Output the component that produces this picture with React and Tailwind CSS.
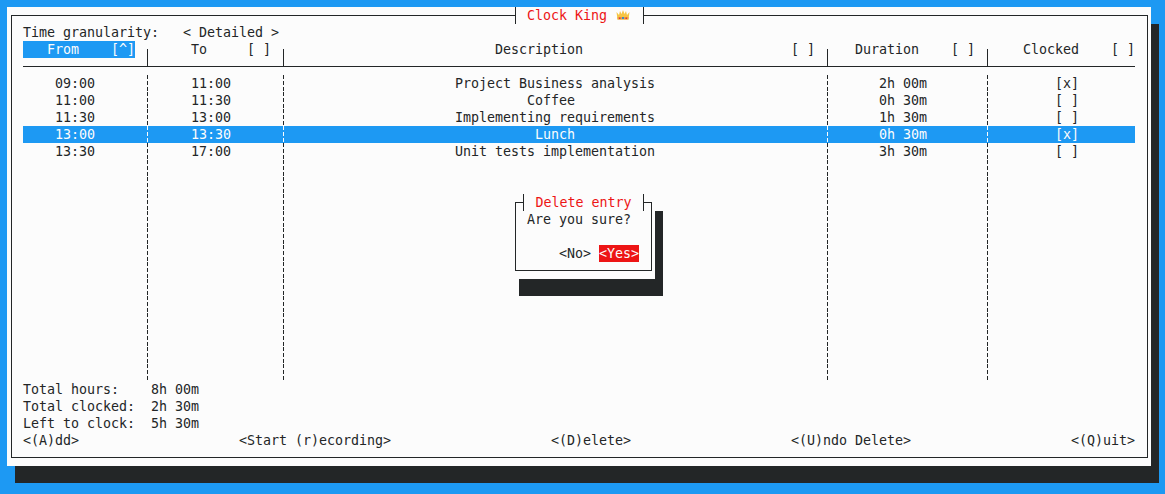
const rows = [
  { from: "09:00", to: "11:00", desc: "Project Business analysis", dur: "2h 00m", clocked: "[x]" },
  { from: "11:00", to: "11:30", desc: "Coffee", dur: "0h 30m", clocked: "[ ]" },
  { from: "11:30", to: "13:00", desc: "Implementing requirements", dur: "1h 30m", clocked: "[ ]" },
  { from: "13:00", to: "13:30", desc: "Lunch", dur: "0h 30m", clocked: "[x]", selected: true },
  { from: "13:30", to: "17:00", desc: "Unit tests implementation", dur: "3h 30m", clocked: "[ ]" },
];
const COLS = "grid grid-cols-[120px_8px_128px_8px_536px_8px_152px_8px_144px]";

function Dash() {
  return (
    <div className="h-[17px] w-2 pl-1">
      <div className="h-full w-px bg-[linear-gradient(currentColor_0,currentColor_4px,transparent_4px,transparent_6px,currentColor_6px,currentColor_10px,transparent_10px,transparent_12px,currentColor_12px,currentColor_16px,transparent_16px)]" />
    </div>
  );
}
function Head({ label, sort = "[ ]", className = "" }) {
  return (
    <div className={`flex whitespace-pre ${className}`}>
      <span className="flex-1 text-center">{label}</span>
      <span>{sort}</span>
    </div>
  );
}
function Tick() {
  return (
    <div className="h-[17px] w-2 pl-1 pt-2">
      <div className="h-full w-px bg-[#232627]" />
    </div>
  );
}
function Row({ r }) {
  return (
    <div className={`${COLS} h-[17px] text-center whitespace-pre ${r?.selected ? "bg-[#1d99f3] text-[#fcfcfc]" : ""}`}>
      <div className="pr-4">{r?.from}</div>
      <Dash />
      <div className="pr-2">{r?.to}</div>
      <Dash />
      <div className={r && r.desc.length % 2 === 0 ? "pr-2" : ""}>{r?.desc}</div>
      <Dash />
      <div className="pr-2">{r?.dur}</div>
      <Dash />
      <div className="pl-2">{r?.clocked}</div>
    </div>
  );
}
function Crown() {
  return (
    <svg width="14" height="10" viewBox="0 0 14 10" className="ml-[9px] mt-[3px] shrink-0">
      <path d="M0.5 2 L3 5 L4 1 L5.5 4 L7 0 L8.5 4 L10 1 L11 5 L13.5 2 L12.5 9.5 L1.5 9.5 Z" fill="#f6c544" />
      <rect x="1.5" y="7" width="11" height="2.5" fill="#eda53c" />
      <rect x="3" y="7.5" width="1.5" height="1.5" fill="#dd2e44" />
      <rect x="6" y="7" width="2" height="2" fill="#3b88c3" />
      <rect x="9.5" y="7.5" width="1.5" height="1.5" fill="#dd2e44" />
    </svg>
  );
}

export default function App() {
  return (
    <div className="h-[494px] w-full overflow-hidden bg-[#1d99f3] p-[7px] font-['DejaVu_Sans_Mono',monospace] text-[13.33px] leading-[17px] tracking-[-0.025px] text-[#232627]">
      <div className="relative h-[459px] w-[1144px] bg-[#fcfcfc] px-1 py-2 shadow-[8px_17px_0_#232627]">
        <div className="h-[443px] w-[1137px] border border-[#232627] pl-[11px] pr-3 pt-2">
          <div className="whitespace-pre">Time granularity:   {"<"} Detailed {">"}</div>
          <div className={COLS}>
            <Head label="From " sort="[^]" className="mr-2 bg-[#1d99f3] text-[#fcfcfc]" />
            <Tick />
            <Head label="To" className="mr-2" />
            <Tick />
            <Head label="Description" className="mr-2" />
            <Tick />
            <Head label="Duration " className="mr-2" />
            <Tick />
            <Head label="Clocked" />
          </div>
          <div className={`${COLS} h-[17px]`}>
            {[0, 1, 2, 3, 4, 5, 6, 7, 8].map((i) =>
              <div key={i} className={`h-[9px] border-b border-[#232627] ${i % 2 ? "relative before:absolute before:left-1 before:top-0 before:h-[9px] before:w-px before:bg-[#232627]" : ""}`} />
            )}
          </div>
          {Array.from({ length: 18 }).map((_, i) => <Row key={i} r={rows[i]} />)}
          <div className="grid grid-cols-[128px_1fr] whitespace-pre">
            <span>Total hours:</span><span>8h 00m</span>
            <span>Total clocked:</span><span>2h 30m</span>
            <span>Left to clock:</span><span>5h 30m</span>
          </div>
          <div className="flex justify-between whitespace-pre">
            <span>{"<(A)dd>"}</span>
            <span>{"<Start (r)ecording>"}</span>
            <span>{"<(D)elete>"}</span>
            <span>{"<(U)ndo Delete>"}</span>
            <span>{"<(Q)uit>"}</span>
          </div>
        </div>

        <div className="absolute left-[508px] top-0 flex h-[17px] w-[129px] border-x border-[#232627] bg-[#fcfcfc] pl-[11px] whitespace-pre text-[#ed1515]">
          <span>Clock King</span>
          <Crown />
        </div>

        <div className="absolute left-[504px] top-[187px] h-[85px] w-[144px] bg-[#fcfcfc] px-1 py-2 shadow-[8px_17px_0_#232627]">
          <div className="h-[69px] w-[137px] border border-[#232627] pl-[11px] pr-3 pt-2 whitespace-pre">
            <div>Are you sure?</div>
            <div className="h-[17px]" />
            <div className="flex justify-end gap-2">
              <span>{"<No>"}</span>
              <span className="bg-[#ed1515] text-[#fcfcfc]">{"<Yes>"}</span>
            </div>
          </div>
          <div className="absolute left-3 top-0 h-[17px] w-[121px] border-x border-[#232627] bg-[#fcfcfc] text-center text-[#ed1515]">
            Delete entry
          </div>
        </div>
      </div>
    </div>
  );
}
